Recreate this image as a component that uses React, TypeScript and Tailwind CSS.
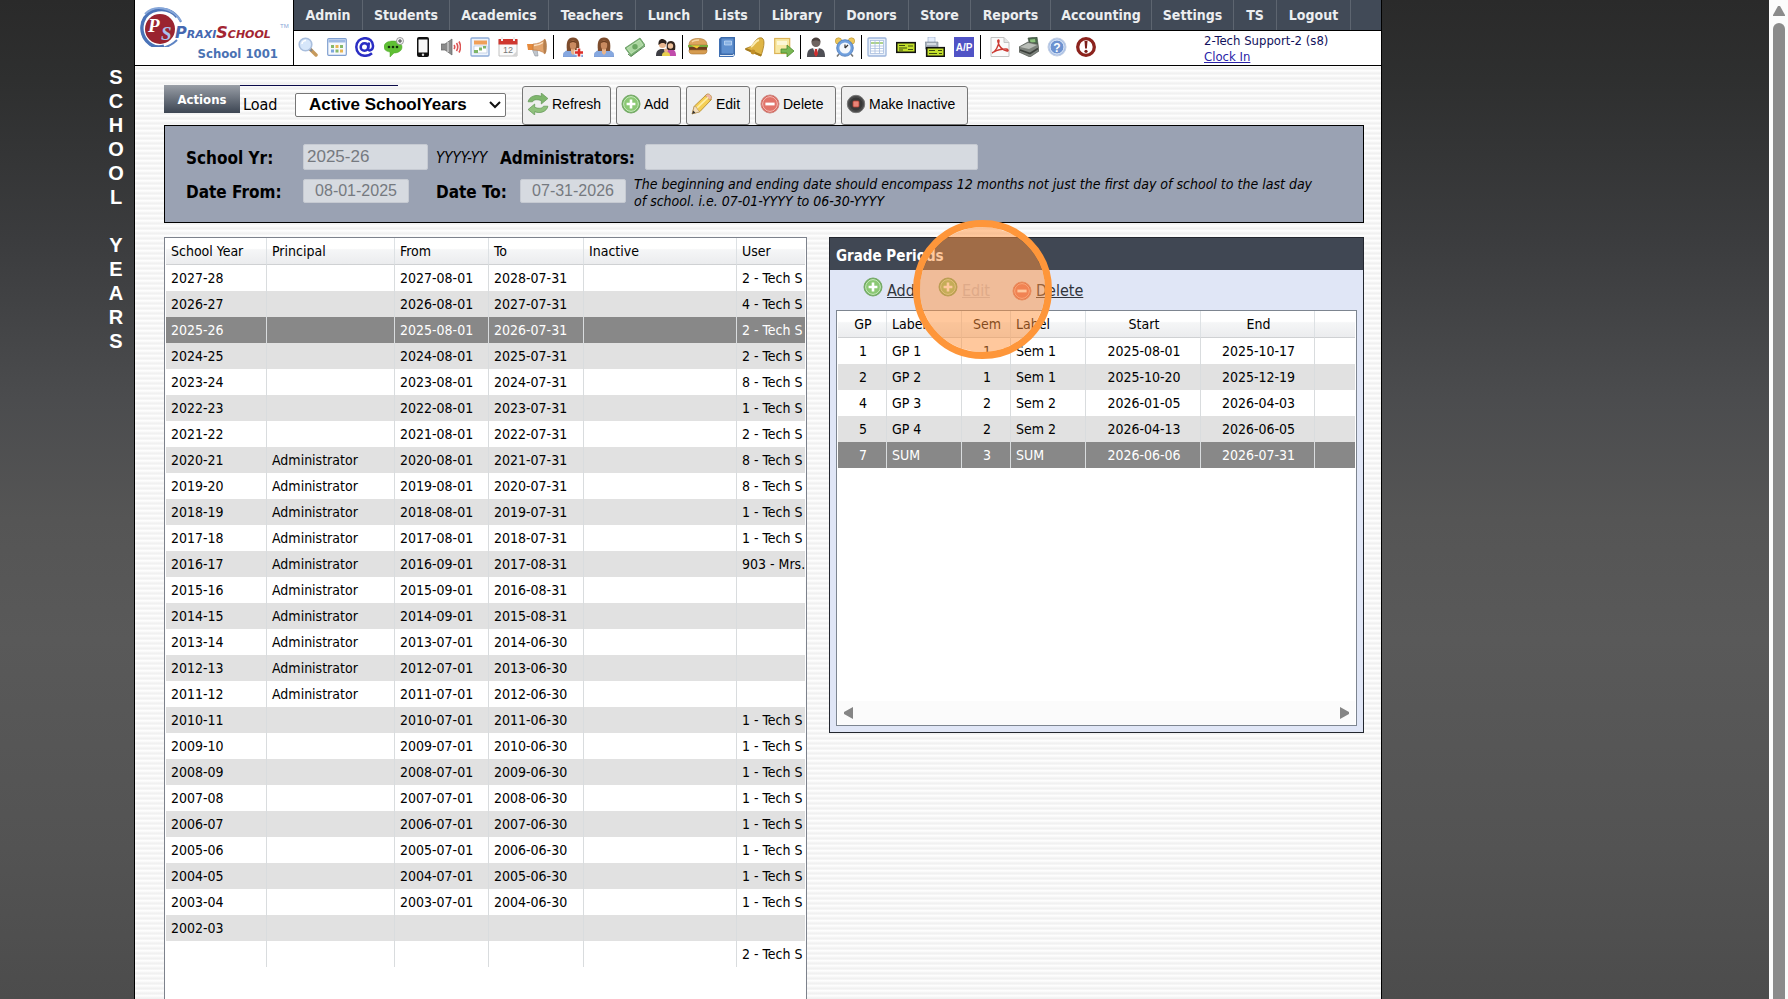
import { Fragment, type ReactNode } from "react";
import clsx from "clsx";

const menu = [
  { label: "Admin", width: "w-[69px]" },
  { label: "Students", width: "w-[87px]" },
  { label: "Academics", width: "w-[99px]" },
  { label: "Teachers", width: "w-[87px]" },
  { label: "Lunch", width: "w-[67px]" },
  { label: "Lists", width: "w-[57px]" },
  { label: "Library", width: "w-[75px]" },
  { label: "Donors", width: "w-[74px]" },
  { label: "Store", width: "w-[62px]" },
  { label: "Reports", width: "w-[80px]" },
  { label: "Accounting", width: "w-[101px]" },
  { label: "Settings", width: "w-[82px]" },
  { label: "TS", width: "w-[43px]" },
  { label: "Logout", width: "w-[74px]" },
];

function Svg({ children, className = "w-5 h-5" }: { children: ReactNode; className?: string }) {
  return (
    <svg viewBox="0 0 20 20" className={clsx("shrink-0", className)} aria-hidden="true">
      {children}
    </svg>
  );
}

function Woman() {
  return (
    <>
      <path d="M0 20c0-5 2-7 10-7s10 2 10 7z" fill="#86a8e0" stroke="#6d8fc9" strokeWidth=".5" />
      <path d="M4 14C3 6 4 .5 10 .5s7 5.500 6 13.500z" fill="#7d4c2c" />
      <path d="M8 12h4v4l-2 2-2-2z" fill="#e9b48b" />
      <ellipse cx="10" cy="8" rx="3.200" ry="4.600" fill="#c98a60" />
      <path d="M6.500 6c1-3 6-3 7 0l-3.500-1z" fill="#6b3d20" />
    </>
  );
}

function Check() {
  return (
    <>
      <rect x=".7" y="5.7" width="18.6" height="9.6" fill="#c3e02c" stroke="#111" strokeWidth="1.6" />
      <path d="M3 8.5h6M3 11h8M3 13h4M12 9h5M12 12.5h5" stroke="#3f4d10" strokeWidth="1" />
    </>
  );
}

function AddIcon({ className }: { className?: string }) {
  return (
    <Svg className={className}>
      <circle cx="10" cy="10" r="9" fill="#67ad55" stroke="#78a96b" />
      <circle cx="10" cy="10" r="7.4" fill="#8bc874" stroke="#d3ecc9" strokeWidth=".9" />
      <path d="M10 5.6v8.8M5.6 10h8.8" stroke="#fff" strokeWidth="2.6" />
    </Svg>
  );
}

function DeleteIcon({ className }: { className?: string }) {
  return (
    <Svg className={className}>
      <circle cx="10" cy="10" r="9" fill="#d4574d" stroke="#cf8a83" />
      <circle cx="10" cy="10" r="7.4" fill="#e2746a" stroke="#f4c6c0" strokeWidth=".9" />
      <path d="M5.4 10h9.2" stroke="#fff" strokeWidth="2.8" />
    </Svg>
  );
}

function RefreshIcon() {
  return (
    <Svg className="w-[22px] h-[22px]">
      <path d="M1 8C2 3 8 1 13 3V0l6 5-6 5V7C9 5.500 6 6 5 8z" fill="#7db56b" stroke="#5c9150" strokeWidth=".6" />
      <path d="M19 12c-1 5-7 7-12 5v3l-6-5 6-5v3c4 1.500 7 1 8-1z" fill="#8fc17c" stroke="#5c9150" strokeWidth=".6" />
    </Svg>
  );
}

function PencilIcon() {
  return (
    <Svg className="w-[22px] h-[22px]">
      <path d="M1 19l2-7L14 1.500l4.500 4.500L8 17z" fill="#f5cf55" stroke="#b48a2c" strokeWidth=".8" />
      <path d="M13 2.500L14.500 1c2-1 5 2 4 4L17 6.500z" fill="#eeb6a6" stroke="#b48a2c" strokeWidth=".6" />
      <path d="M5 14L15.500 4" stroke="#fdeea8" strokeWidth="1.500" />
      <path d="M1 19l2-7 2 1 1 2 2 2z" fill="#f3dfbd" stroke="#a9865a" strokeWidth=".5" />
      <path d="M1 19l1-3 2 2z" fill="#333" />
    </Svg>
  );
}

function StopIcon() {
  return (
    <Svg>
      <circle cx="10" cy="10" r="8.700" fill="#4a4a4a" stroke="#777" />
      <circle cx="10" cy="10" r="6.500" fill="#383838" />
      <rect x="7" y="7" width="6" height="6" rx="1" fill="#e88578" stroke="#b93f33" strokeWidth=".8" />
    </Svg>
  );
}

const toolGroups: { className: string; icons: { name: string; art: ReactNode }[] }[] = [
  {
    className: "w-[249px]",
    icons: [
      {
        name: "Search",
        art: (
          <>
            <path d="M12 12l6 6" stroke="#c79a5c" strokeWidth="3.500" strokeLinecap="round" />
            <path d="M12 12l2 2" stroke="#888" strokeWidth="2.500" />
            <circle cx="7.500" cy="7.500" r="6.300" fill="#d6e6fa" stroke="#a9bedd" strokeWidth="1.600" />
            <path d="M4 7c0-2 2-3.500 4-3.500" stroke="#fff" strokeWidth="1.500" fill="none" />
          </>
        ),
      },
      {
        name: "Schedule",
        art: (
          <>
            <rect x=".7" y="1.700" width="18.600" height="16.600" rx="1" fill="#f6f9fd" stroke="#7f9fd0" strokeWidth="1.200" />
            <path d="M1.500 2.500h17v3h-17z" fill="#9db9e4" />
            <path d="M4 8h3v3H4zM13 8h3v3h-3zM8.500 12.500h3v3h-3z" fill="#86b86b" />
            <path d="M8.500 8h3v3h-3zM13 12.500h3v3h-3z" fill="#e9b553" />
            <path d="M4 12.500h3v3H4z" fill="#7ea6dc" />
          </>
        ),
      },
      {
        name: "Email",
        art: (
          <>
            <circle cx="9.500" cy="10" r="3.800" fill="none" stroke="#2a2dc4" strokeWidth="2.600" />
            <path
              d="M14 5.500l-1 6c-.3 3 4.800 2.500 5-2C18.300 4 14.500 1.200 10 1.200 5 1.200 1.300 5 1.300 10S5 18.800 10 18.800c3 0 5-.8 7-2.500"
              fill="none"
              stroke="#2a2dc4"
              strokeWidth="2.500"
            />
          </>
        ),
      },
      {
        name: "Messages",
        art: (
          <>
            <path d="M9 4c5 0 9 2 9 6s-4 6-8 6l-4 4v-5c-4-.5-6-2.500-6-5 0-4 4-6 9-6z" fill="#5fbf34" stroke="#4ba427" strokeWidth=".5" />
            <circle cx="5" cy="10" r="1.300" fill="#12300a" />
            <circle cx="9" cy="10" r="1.300" fill="#12300a" />
            <circle cx="13" cy="10" r="1.300" fill="#12300a" />
            <circle cx="16" cy="4" r="3.500" fill="#f5f5f5" stroke="#888" strokeWidth=".8" />
            <path d="M16 2v4M14 4h4" stroke="#444" strokeWidth="1" />
          </>
        ),
      },
      {
        name: "Mobile",
        art: (
          <>
            <rect x="4" y="0" width="12" height="20" rx="2" fill="#111" />
            <rect x="5.500" y="2.500" width="9" height="13" fill="#f7f7f7" />
            <circle cx="10" cy="17.700" r="1.200" fill="#ddd" />
          </>
        ),
      },
      {
        name: "Announcements",
        art: (
          <>
            <path d="M0 7h4l7-5v16l-7-5H0z" fill="#8b8b8b" stroke="#666" strokeWidth=".7" />
            <path d="M7 5v10" stroke="#c8c8c8" strokeWidth="1.500" />
            <path d="M13 8q1.500 2 0 4M15.500 6q2.500 4 0 8M18 4.500q3 5.500 0 11" stroke="#dc5454" strokeWidth="1.600" fill="none" />
          </>
        ),
      },
      {
        name: "Planner",
        art: (
          <>
            <rect x="1" y="1" width="18" height="18" rx="1" fill="#eef4fc" stroke="#8eacd8" strokeWidth="1.300" />
            <rect x="4" y="3.500" width="13" height="4" fill="#f0a058" />
            <path d="M4 9h13v7H4z" fill="#fff" stroke="#a9bcd8" strokeWidth=".6" />
            <path d="M4 13h4v3H4zM9 10.500h3v3H9zM13 9h3v2.500h-3z" fill="#7db567" />
          </>
        ),
      },
      {
        name: "Calendar",
        art: (
          <>
            <path d="M1 3h18v16H1z" fill="#fafafa" stroke="#c2c2c2" />
            <path d="M.5 2h19v5.500H.5z" fill="#cf3830" />
            <path d="M4 0v4M16 0v4" stroke="#eee" strokeWidth="2" />
            <text x="5" y="16" fontSize="9" fill="#777" fontFamily="Liberation Sans">
              12
            </text>
            <path d="M14 19l5-5v5z" fill="#d4d4d4" />
          </>
        ),
      },
      {
        name: "Megaphone",
        art: (
          <>
            <path d="M5 12h5l1 7H8z" fill="#bfc5cc" stroke="#8d959d" strokeWidth=".6" />
            <path d="M0 7h6v6H1z" fill="#e58a3c" />
            <path d="M6 7c5 0 9-2 12-5v15c-3-3-7-4-12-4z" fill="#e2a46c" stroke="#b8723a" strokeWidth=".6" />
            <path d="M7 8.500c4-.3 7-1.500 9-3" stroke="#fbe2c6" strokeWidth="1.500" fill="none" />
            <ellipse cx="18" cy="9.500" rx="1.800" ry="7" fill="#b6804f" />
          </>
        ),
      },
    ],
  },
  {
    className: "w-[113px]",
    icons: [
      {
        name: "Add student",
        art: (
          <>
            <Woman />
            <path d="M16 11v9M11.500 15.500h9" stroke="#fff" strokeWidth="4.500" />
            <path d="M16 11.500v8M12 15.500h8" stroke="#dd2f2a" strokeWidth="2.600" />
          </>
        ),
      },
      { name: "Student", art: <Woman /> },
      {
        name: "Payments",
        art: (
          <>
            <path d="M0 11L15 1l5 7L6 19z" fill="#7cb574" stroke="#558a50" strokeWidth=".7" />
            <path d="M2 11.300L14.500 3l3.500 5L6 16.500z" fill="#abd6a0" stroke="#cbe8c3" strokeWidth=".7" />
            <circle cx="10" cy="9.700" r="2.700" fill="#6aa661" />
            <path d="M3 17l3 2.500L20 9" stroke="#558a50" fill="none" />
          </>
        ),
      },
      {
        name: "Family",
        art: (
          <>
            <path d="M0 19c0-5 2-7 6-7s5 2 5 7z" fill="#3e3e44" />
            <path d="M10 19c0-5 2-7 5-7s5 2 5 7z" fill="#c04bab" />
            <circle cx="6.500" cy="7.500" r="3.600" fill="#e8b68f" />
            <path d="M2.500 8C2 3 5 1 8 2.500c3 1 3 3 2 5-1-2-5-2.500-7.500.5z" fill="#2c211c" />
            <path d="M11 13c-1-6 0-9 4-9s5 4 4 9z" fill="#33241d" />
            <circle cx="14.500" cy="9" r="2.700" fill="#eec19b" />
            <path d="M6 19c0-3 1-4 4-4s4 1 4 4z" fill="#e7cf4d" />
            <circle cx="10" cy="13.500" r="2" fill="#e6b088" />
          </>
        ),
      },
    ],
  },
  {
    className: "w-[106px]",
    icons: [
      {
        name: "Lunch",
        art: (
          <>
            <path d="M1 8c0-5 4-6.500 9-6.500S19 3 19 8z" fill="#dca65e" stroke="#a97330" strokeWidth=".6" />
            <path d="M4 5c2-2 5-2 7-2" stroke="#f4d7a4" strokeWidth="1.300" fill="none" />
            <path d="M0 8h20v2.500H0z" fill="#79ab3e" />
            <path d="M1 10h18v3H1z" fill="#6c3d1d" />
            <path d="M3 8.500l9 0-3 3z" fill="#f3c934" />
            <path d="M1 13h18c0 3-1 4-4 4H5c-3 0-4-1-4-4z" fill="#d69c50" stroke="#a97330" strokeWidth=".6" />
          </>
        ),
      },
      {
        name: "Gradebook",
        art: (
          <>
            <path d="M2 2l2-2h14v18l-2 2H2z" fill="#3f70b3" />
            <path d="M4 1h13v16H4z" fill="#5f90cf" stroke="#355f9b" strokeWidth=".7" />
            <path d="M7.500 4h7v4h-7z" fill="#8ab3e4" stroke="#c8def7" strokeWidth=".7" />
            <path d="M3 18.500h13l1-1" stroke="#e9eef5" strokeWidth="1.200" fill="none" />
          </>
        ),
      },
      {
        name: "Bell",
        art: (
          <>
            <path d="M17 1c4 2 1 12-1 18L0 12c3-2 5-1 8-5s5-7 9-6z" fill="#dfb545" stroke="#a67b1e" strokeWidth=".8" />
            <path d="M6 10c4-3 4-6 8-7" stroke="#faebae" strokeWidth="2" fill="none" />
            <path d="M1 12l15 6.500" stroke="#a67b1e" strokeWidth="2" />
            <circle cx="8" cy="15" r="2.400" fill="#c18f28" />
          </>
        ),
      },
      {
        name: "Forward note",
        art: (
          <>
            <rect x=".7" y="1.500" width="15" height="15" fill="#f8e9a4" stroke="#dcb357" strokeWidth="1.200" />
            <path d="M3 4h10v4H3z" fill="#fdf7d6" />
            <path d="M7 12h6V8l7 6-7 6v-4H7z" fill="#79b853" stroke="#4c8a2f" strokeWidth=".8" />
          </>
        ),
      },
    ],
  },
  {
    className: "w-[49px]",
    icons: [
      {
        name: "Staff",
        art: (
          <>
            <path d="M1 20c0-7 2-9 9-9s9 2 9 9z" fill="#4f4f55" />
            <path d="M7 11h6l-3 8z" fill="#f2f2f2" />
            <path d="M9 12h2l1 5-2 3-2-3z" fill="#cf2e2e" />
            <circle cx="10" cy="5.500" r="4.500" fill="#6e6460" />
            <path d="M5.500 5c0-6 9-6 9 0-2-2-7-2-9 0z" fill="#4b413e" />
          </>
        ),
      },
      {
        name: "Time clock",
        art: (
          <>
            <circle cx="3.500" cy="4" r="3.200" fill="#ecc65b" stroke="#b99232" strokeWidth=".6" />
            <circle cx="16.500" cy="4" r="3.200" fill="#ecc65b" stroke="#b99232" strokeWidth=".6" />
            <path d="M4 17l-2 2.500M16 17l2 2.500" stroke="#777" strokeWidth="1.600" />
            <circle cx="10" cy="11" r="8.300" fill="#6f9fdd" stroke="#4877b8" strokeWidth=".8" />
            <circle cx="10" cy="11" r="5.600" fill="#f3f7fc" />
            <path d="M10 11l3-3M10 11v-3.500" stroke="#333" strokeWidth="1.200" />
          </>
        ),
      },
    ],
  },
  {
    className: "w-[107px]",
    icons: [
      {
        name: "Ledger",
        art: (
          <>
            <rect x="1" y="1" width="18" height="18" rx="1" fill="#e7effa" stroke="#9db5db" strokeWidth="1.300" />
            <rect x="3.500" y="3.500" width="13" height="13" fill="#fff" stroke="#a8bede" strokeWidth=".8" />
            <path d="M4 6h12" stroke="#a5cf7f" strokeWidth="1.800" />
            <path d="M3.500 9h13M3.500 11.500h13M3.500 14h13M8 4v12.500M12.500 4v12.500" stroke="#a8bede" strokeWidth=".8" />
          </>
        ),
      },
      { name: "Check", art: <Check /> },
      {
        name: "Print checks",
        art: (
          <>
            <path d="M3 0h7v6H3z" fill="#e5eefc" stroke="#8fa5c6" strokeWidth=".6" />
            <path d="M0 5h13v7H0z" fill="#a9b2bd" stroke="#7a8490" strokeWidth=".6" />
            <path d="M2 7h9" stroke="#e9edf2" strokeWidth="1.400" />
            <rect x="1.700" y="10.700" width="17.600" height="8.600" fill="#c3e02c" stroke="#111" strokeWidth="1.600" />
            <path d="M4 13.500h6M4 16.500h8M13 13.500h4M14 16.500h3" stroke="#3f4d10" strokeWidth="1" />
          </>
        ),
      },
      {
        name: "Accounts payable",
        art: (
          <>
            <rect width="20" height="20" fill="#5053c6" />
            <text x="10" y="14" fontSize="10" fontWeight="bold" fill="#fff" textAnchor="middle" fontFamily="Liberation Sans">
              A/P
            </text>
          </>
        ),
      },
    ],
  },
  {
    className: "w-[106px]",
    icons: [
      {
        name: "PDF",
        art: (
          <>
            <path d="M1 .5h13l5 5v14H1z" fill="#fbfbfb" stroke="#c3c3c3" />
            <path d="M14 .5v5h5" fill="#e4e4e4" stroke="#c3c3c3" />
            <path
              d="M2 16c3-1 7-7 7-12 0-2-2-1-1 1 1 4 4 8 9 9 2 0 1-2-1-2-4 0-9 1-12 3"
              fill="none"
              stroke="#cc3a33"
              strokeWidth="1.400"
            />
          </>
        ),
      },
      {
        name: "Cash register",
        art: (
          <>
            <path d="M9 1l9-1 1 7-8 2z" fill="#4d6a4f" stroke="#3c4a3d" strokeWidth=".6" />
            <path d="M11 2.500l5-.5.5 3-5 1z" fill="#8cc07c" />
            <path d="M0 10l9-5 10 2 1 7-9 6-11-5z" fill="#7e837d" stroke="#4f544e" strokeWidth=".7" />
            <path d="M1 10l8-4 9 2-8 4z" fill="#b9bdb7" />
            <path d="M1 13l10 3.500 8-5" stroke="#3c403b" strokeWidth="1.600" fill="none" />
          </>
        ),
      },
      {
        name: "Help",
        art: (
          <>
            <circle cx="10" cy="10" r="9" fill="#a9c0e6" stroke="#c3cfe4" />
            <circle cx="10" cy="10" r="7" fill="#6d92d0" stroke="#e3ebf8" />
            <text x="10" y="14.500" fontSize="12" fontWeight="bold" fill="#fff" textAnchor="middle" fontFamily="Liberation Sans">
              ?
            </text>
          </>
        ),
      },
      {
        name: "Alert",
        art: (
          <>
            <circle cx="10" cy="10" r="8.300" fill="#fff" stroke="#8c231d" strokeWidth="3.300" />
            <path d="M8.500 4h3l-.6 7.500H9.100z" fill="#7c1f1a" />
            <circle cx="10" cy="14.300" r="1.600" fill="#7c1f1a" />
          </>
        ),
      },
    ],
  },
];

// [year, principal, from, to, inactive, user]
const schoolYears = [
  ["2027-28", "", "2027-08-01", "2028-07-31", "", "2 - Tech S"],
  ["2026-27", "", "2026-08-01", "2027-07-31", "", "4 - Tech S"],
  ["2025-26", "", "2025-08-01", "2026-07-31", "", "2 - Tech S"],
  ["2024-25", "", "2024-08-01", "2025-07-31", "", "2 - Tech S"],
  ["2023-24", "", "2023-08-01", "2024-07-31", "", "8 - Tech S"],
  ["2022-23", "", "2022-08-01", "2023-07-31", "", "1 - Tech S"],
  ["2021-22", "", "2021-08-01", "2022-07-31", "", "2 - Tech S"],
  ["2020-21", "Administrator", "2020-08-01", "2021-07-31", "", "8 - Tech S"],
  ["2019-20", "Administrator", "2019-08-01", "2020-07-31", "", "8 - Tech S"],
  ["2018-19", "Administrator", "2018-08-01", "2019-07-31", "", "1 - Tech S"],
  ["2017-18", "Administrator", "2017-08-01", "2018-07-31", "", "1 - Tech S"],
  ["2016-17", "Administrator", "2016-09-01", "2017-08-31", "", "903 - Mrs."],
  ["2015-16", "Administrator", "2015-09-01", "2016-08-31", "", ""],
  ["2014-15", "Administrator", "2014-09-01", "2015-08-31", "", ""],
  ["2013-14", "Administrator", "2013-07-01", "2014-06-30", "", ""],
  ["2012-13", "Administrator", "2012-07-01", "2013-06-30", "", ""],
  ["2011-12", "Administrator", "2011-07-01", "2012-06-30", "", ""],
  ["2010-11", "", "2010-07-01", "2011-06-30", "", "1 - Tech S"],
  ["2009-10", "", "2009-07-01", "2010-06-30", "", "1 - Tech S"],
  ["2008-09", "", "2008-07-01", "2009-06-30", "", "1 - Tech S"],
  ["2007-08", "", "2007-07-01", "2008-06-30", "", "1 - Tech S"],
  ["2006-07", "", "2006-07-01", "2007-06-30", "", "1 - Tech S"],
  ["2005-06", "", "2005-07-01", "2006-06-30", "", "1 - Tech S"],
  ["2004-05", "", "2004-07-01", "2005-06-30", "", "1 - Tech S"],
  ["2003-04", "", "2003-07-01", "2004-06-30", "", "1 - Tech S"],
  ["2002-03", "", "", "", "", ""],
  ["", "", "", "", "", "2 - Tech S"],
];

const gradePeriods = [
  ["1", "GP 1", "1", "Sem 1", "2025-08-01", "2025-10-17", ""],
  ["2", "GP 2", "1", "Sem 1", "2025-10-20", "2025-12-19", ""],
  ["4", "GP 3", "2", "Sem 2", "2026-01-05", "2026-04-03", ""],
  ["5", "GP 4", "2", "Sem 2", "2026-04-13", "2026-06-05", ""],
  ["7", "SUM", "3", "SUM", "2026-06-06", "2026-07-31", ""],
];

type Column = { title: string; width: string; center?: boolean };

const yearColumns: Column[] = [
  { title: "School Year", width: "w-[101px]" },
  { title: "Principal", width: "w-[128px]" },
  { title: "From", width: "w-[94px]" },
  { title: "To", width: "w-[95px]" },
  { title: "Inactive", width: "w-[153px]" },
  { title: "User", width: "" },
];

const periodColumns: Column[] = [
  { title: "GP", width: "w-[49px]", center: true },
  { title: "Label", width: "w-[75px]" },
  { title: "Sem", width: "w-[49px]", center: true },
  { title: "Label", width: "w-[75px]" },
  { title: "Start", width: "w-[115px]", center: true },
  { title: "End", width: "w-[114px]", center: true },
  { title: "", width: "" },
];

function Grid({ label, columns, rows, selected }: { label: string; columns: Column[]; rows: string[][]; selected: number }) {
  return (
    <table aria-label={label} className="w-full table-fixed border-separate border-spacing-0 text-sm leading-5">
      <thead>
        <tr>
          {columns.map((col, i) => (
            <th
              key={i}
              className={clsx(
                "h-[27px] whitespace-nowrap border-b border-b-[#cfd1d3] bg-linear-to-b from-white from-40% via-[#f5f6f7] via-45% to-[#ebecee] py-0 pl-[5px] font-normal",
                i < columns.length - 1 && "border-r border-r-[#dde1e4]",
                col.center ? "pr-[3px] text-center" : "text-left",
                col.width,
              )}
            >
              {col.title}
            </th>
          ))}
        </tr>
      </thead>
      <tbody>
        {rows.map((row, r) => (
          <tr key={r} className={clsx(r === selected ? "bg-[#888888] text-white" : r % 2 ? "bg-[#e1e1e1]" : "bg-white")}>
            {row.map((value, i) => (
              <td
                key={i}
                className={clsx(
                  "h-[26px] whitespace-nowrap py-0 pl-[5px]",
                  i < columns.length - 1 && "border-r border-[#d9dcde]",
                  columns[i].center && "pr-[3px] text-center",
                )}
              >
                {value}
              </td>
            ))}
          </tr>
        ))}
      </tbody>
    </table>
  );
}

function Logo() {
  return (
    <div className="flex w-[159px] shrink-0 flex-col border-r border-black bg-white">
      <svg viewBox="0 0 158 47" className="h-[47px] w-[158px]" role="img" aria-label="PraxiSchool">
        <path d="M46 22C40 9 27 6 17 11 3 18 3 36 15 45c9 6 20 2 27-5" fill="none" stroke="#5d84c4" strokeWidth="2" />
        <path d="M42 17C32 5 12 9 8 22 4 36 15 50 29 46" fill="none" stroke="#4a73b8" strokeWidth="3" />
        <path d="M10 14C20 4 37 7 46 21" fill="none" stroke="#86a6d8" strokeWidth="2" />
        <circle cx="25" cy="29" r="15" fill="#9a2430" />
        <text x="13" y="32" fontSize="19" fontStyle="italic" fontWeight="bold" fontFamily="Liberation Serif" fill="#fff">
          P
        </text>
        <text x="26" y="40" fontSize="19" fontStyle="italic" fontWeight="bold" fontFamily="Liberation Serif" fill="#a9c2ee">
          S
        </text>
        <text
          x="40"
          y="38"
          fontSize="16"
          fontWeight="bold"
          fontStyle="italic"
          fontFamily="DejaVu Sans"
          fill="#4567b0"
          style={{ fontVariant: "small-caps" }}
        >
          Praxi
          <tspan fill="#a32532">School</tspan>
        </text>
        <text x="145" y="28" fontSize="6" fill="#86a6d8" fontFamily="Liberation Sans">
          TM
        </text>
      </svg>
      <p className="pr-[15px] text-right text-[13px] leading-[14px] font-bold text-[#4a72b3]">School 1001</p>
    </div>
  );
}

const toolButton =
  "flex h-[39px] items-center gap-[3px] rounded-[3px] border border-[#767676] bg-[#efefef] px-1 pb-[3px] font-['Liberation_Sans',sans-serif] text-sm text-black";
const fieldLabel = "shrink-0 pt-0.5 text-[17px] leading-5 font-bold";
const field =
  "rounded-[2px] border border-[#c6cad2] bg-[#d6dae0] font-['Liberation_Sans',sans-serif] text-[#75797f]";

export default function App() {
  return (
    <div className="flex h-screen overflow-hidden bg-[linear-gradient(#2a2a2a_0%,#2e2f2f_8%,#3b3c3e_24%,#4b4c4e_40%,#555555_52%,#595959_64%,#535353_85%,#4c4c4c_100%)] font-['DejaVu_Sans_Condensed','DejaVu_Sans',sans-serif] text-black">
      <aside className="w-[134px] shrink-0 pt-[65px] pl-[98px]">
        <h1
          aria-label="School Years"
          className="flex w-9 flex-col items-center font-['Liberation_Sans',sans-serif] text-xl leading-6 font-bold text-white"
        >
          {"SCHOOL YEARS".split("").map((letter, i) => (
            <span key={i} className="h-6">
              {letter}
            </span>
          ))}
        </h1>
      </aside>

      <div className="flex min-w-0 flex-1 flex-col border-x border-black bg-[repeating-linear-gradient(#ffffff_0px,#f8f8f8_2px,#f1f1f1_3px,#f1f1f1_4px,#fafafa_5px)]">
        <header className="flex h-[66px] shrink-0 border-b border-black bg-white">
          <Logo />
          <div className="flex min-w-0 flex-1 flex-col">
            <nav className="flex h-[31px] shrink-0 border-b border-black bg-[#414a57]">
              {menu.map((item) => (
                <a
                  key={item.label}
                  href="#"
                  className={clsx(
                    "flex items-center justify-center border-r border-[#5d6570] text-sm font-bold text-[#eceef0]",
                    item.width,
                  )}
                >
                  {item.label}
                </a>
              ))}
            </nav>
            <div className="flex flex-1 items-center justify-between">
              <div className="flex items-center pb-[3px] pl-1">
                {toolGroups.map((group, g) => (
                  <Fragment key={g}>
                    {g > 0 && <span className="mr-[5px] ml-[6px] h-6 w-px bg-black" />}
                    <div className={clsx("flex justify-between", (g === 1 || g === 5) && "ml-1", group.className)}>
                      {group.icons.map((icon) => (
                        <button key={icon.name} type="button" aria-label={icon.name}>
                          <Svg>{icon.art}</Svg>
                        </button>
                      ))}
                    </div>
                  </Fragment>
                ))}
              </div>
              <div className="w-[177px] pt-px text-[13px] leading-4 text-[#11115c]">
                <p>2-Tech Support-2 (s8)</p>
                <a href="#" className="text-[#2a22a8] underline">
                  Clock In
                </a>
              </div>
            </div>
          </div>
        </header>

        <main className="flex min-h-0 flex-1 flex-col pt-[19px] pr-[17px] pl-[29px]">
          <div className="relative flex h-10 shrink-0 items-start">
            <span className="absolute top-0 left-[76px] h-px w-[158px] bg-[#0b0b4a]" />
            <h2 className="h-7 w-[76px] bg-linear-to-b from-[#9a9fa7] to-[#3d4653] text-center text-[13px] leading-[30px] font-bold text-white">
              Actions
            </h2>
            <label htmlFor="load" className="w-[55px] pt-2 pl-[3px] text-base leading-6">
              Load
            </label>
            <div className="relative mt-2">
              <select
                id="load"
                className="h-6 w-[211px] appearance-none rounded-[2px] border border-[#767676] bg-white pl-[13px] font-['Liberation_Sans',sans-serif] text-[17px] leading-5 font-bold"
              >
                <option>Active SchoolYears</option>
              </select>
              <svg viewBox="0 0 12 8" className="pointer-events-none absolute top-2 right-[5px] h-2 w-3" aria-hidden="true">
                <path d="M1 1l5 5 5-5" fill="none" stroke="#111" strokeWidth="2" />
              </svg>
            </div>
            <div className="ml-4 flex gap-[5px] pt-px">
              <button type="button" className={clsx(toolButton, "w-[89px]")}>
                <RefreshIcon />
                Refresh
              </button>
              <button type="button" className={clsx(toolButton, "w-[65px]")}>
                <AddIcon />
                Add
              </button>
              <button type="button" className={clsx(toolButton, "w-[64px]")}>
                <PencilIcon />
                Edit
              </button>
              <button type="button" className={clsx(toolButton, "w-[81px]")}>
                <DeleteIcon />
                Delete
              </button>
              <button type="button" className={clsx(toolButton, "w-[127px]")}>
                <StopIcon />
                Make Inactive
              </button>
            </div>
          </div>

          <form className="shrink-0 border border-black bg-[#9aa2b3] pt-[18px] pb-[14px] pl-[21px]">
            <div className="flex h-[26px] items-center">
              <label htmlFor="year" className={clsx(fieldLabel, "w-[117px]")}>
                School Yr:
              </label>
              <input id="year" disabled defaultValue="2025-26" className={clsx(field, "h-[26px] w-[125px] px-[3px] text-[17px]")} />
              <em className="w-[72px] pt-0.5 pl-2 text-[15px] leading-5">YYYY-YY</em>
              <label htmlFor="admins" className={clsx(fieldLabel, "w-[145px]")}>
                Administrators:
              </label>
              <input id="admins" disabled className={clsx(field, "h-[26px] w-[333px]")} />
            </div>
            <div className="mt-1 flex h-[34px] items-center">
              <label htmlFor="from" className={clsx(fieldLabel, "w-[117px]")}>
                Date From:
              </label>
              <input id="from" disabled defaultValue="08-01-2025" className={clsx(field, "h-6 w-[106px] text-center text-base")} />
              <label htmlFor="to" className={clsx(fieldLabel, "ml-[27px] w-[84px]")}>
                Date To:
              </label>
              <input id="to" disabled defaultValue="07-31-2026" className={clsx(field, "h-6 w-[106px] text-center text-base")} />
              <em className="ml-2 max-w-[690px] pt-[3px] text-sm leading-[17px]">
                The beginning and ending date should encompass 12 months not just the first day of school to the last day of
                school. i.e. 07-01-YYYY to 06-30-YYYY
              </em>
            </div>
          </form>

          <div className="mt-[14px] flex min-h-0 flex-1 items-start gap-[22px]">
            <section className="h-full w-[643px] shrink-0 overflow-hidden border border-b-0 border-[#7d828c] bg-white px-px">
              <Grid label="School years" columns={yearColumns} rows={schoolYears} selected={2} />
            </section>

            <section className="relative min-w-0 flex-1 border border-[#23272f] bg-[#e0e6f6]">
              <h2 className="bg-[#404753] pt-1 pl-[6px] text-[15px] leading-7 font-bold text-white">Grade Periods</h2>
              <div className="flex h-10 items-center pt-0.5 pl-[33px] text-base text-[#30343c]">
                <a href="#" className="flex w-[75px] items-center gap-1 underline">
                  <AddIcon className="mb-2 h-5 w-5" />
                  Add
                </a>
                <a href="#" className="flex w-[74px] items-center gap-1 text-[#bcc2d6] underline">
                  <AddIcon className="mb-2 h-5 w-5" />
                  Edit
                </a>
                <a href="#" className="flex items-center gap-1 underline">
                  <DeleteIcon className="h-5 w-5" />
                  Delete
                </a>
              </div>
              <div className="mx-[6px] mb-[6px] flex h-[416px] flex-col justify-between border border-[#7d8590] bg-white px-px">
                <Grid label="Grade periods" columns={periodColumns} rows={gradePeriods} selected={4} />
                <div className="flex h-6 items-center justify-between bg-[#fbfbfb] px-[6px]">
                  <svg viewBox="0 0 9 12" className="h-3 w-[9px]" aria-hidden="true">
                    <path d="M9 0v12L0 7V5z" fill="#858585" />
                  </svg>
                  <svg viewBox="0 0 9 12" className="h-3 w-[9px]" aria-hidden="true">
                    <path d="M0 0v12l9-5V5z" fill="#858585" />
                  </svg>
                </div>
              </div>
              {/* click highlight over the Edit link */}
              <span className="pointer-events-none absolute -top-[18px] left-[83px] h-[139px] w-[139px] rounded-full border-[7px] border-[#fe963a] bg-[rgba(255,145,60,0.5)] bg-clip-padding" />
            </section>
          </div>
        </main>
      </div>

      <div className="w-[387px] shrink-0" />
      <div className="flex w-[19px] shrink-0 flex-col items-center bg-[#fcfcfc] pt-[6px]">
        <svg viewBox="0 0 12 10" className="h-[10px] w-3 shrink-0" aria-hidden="true">
          <path d="M0 10V9l5-9h2l5 9v1z" fill="#8b8b8b" />
        </svg>
        <div className="mt-[7px] w-3 flex-1 rounded-t-full bg-[#8b8b8b]" />
      </div>
    </div>
  );
}
